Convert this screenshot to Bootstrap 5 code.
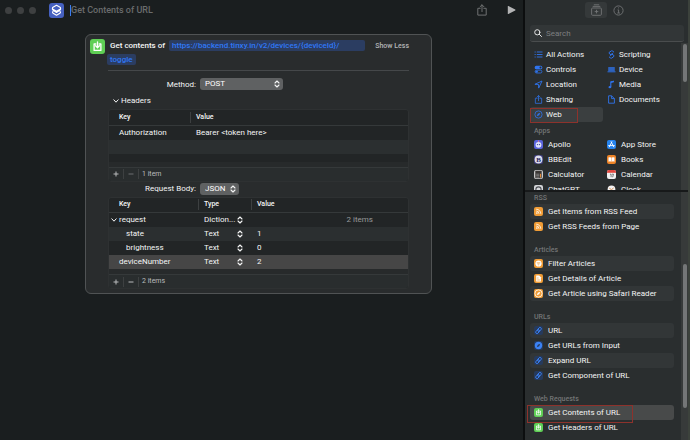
<!DOCTYPE html>
<html lang="en" data-bs-theme="dark">
<head>
<meta charset="utf-8">
<meta name="viewport" content="width=device-width, initial-scale=1">
<title>Shortcuts – Get Contents of URL</title>
<link rel="stylesheet" href="https://cdn.jsdelivr.net/npm/bootstrap@5.3.0/dist/css/bootstrap.min.css">
<style>
  body { font: 400 8px/15px Roboto, "Liberation Sans", sans-serif; background: #1a1e1f; color: #f4f5f5; overflow: hidden; }
  button, input, select { font: inherit; color: inherit; border: 0; background: none; padding: 0; margin: 0; }
  svg { display: block; flex: none; }
  ul { list-style: none; padding: 0; margin: 0; }
  .blue { color: #2f74ee; }

  /* title bar */
  .titlebar { height: 20px; padding-left: 5px; padding-right: 7px; }
  .dots { gap: 5px; }
  .dot { width: 7px; height: 7px; border-radius: 50%; background: #3e4041; }
  .app-tile { width: 15px; height: 15px; border-radius: 3px; background: #4661c0; color: #fff; margin-left: 13px; }
  .name-input { font-size: 9px; font-weight: 500; height: 11px; margin-left: 6px; border-left: 1px solid #3b7cf0; min-width: 0; outline: 0; }
  .name-input::placeholder { color: #6a6c6d; opacity: 1; }
  .share-btn { color: #6f7172; }
  .run-btn { color: #b3b4b5; margin-left: 20px; }

  /* action card */
  .canvas { padding: 14px 91px 0 85px; }
  .action { background: #292c2d; border: 1px solid #505354; border-radius: 6px; padding: 4px 22px 4px 4px; }
  .action-tile { width: 15px; height: 15px; border-radius: 3px; background: #5fcf55; color: #fff; }
  .action-head { gap: 5px; font-weight: 500; line-height: 14px; }
  .token { background: #2b3d61; color: #3078f6; border-radius: 2px; line-height: 11px; text-decoration: none; }
  .token-url { margin-left: 2px; padding: 0 26px 0 3px; }
  .token-end { padding: 0 3px; margin-left: -3px; }
  .show-less { color: #b4b6b7; font-size: 7px; font-weight: 500; }
  .action-body { margin-left: 18px; border-top: 1px solid #45484a; margin-top: 3px; padding-top: 7px; }
  .field { gap: 4px; height: 12px; }
  .field label { width: 88px; text-align: right; }
  .field-body { margin: 1px 0 2px; }
  .picker { display: inline-grid; align-items: center; }
  .picker > * { grid-area: 1 / 1; }
  .picker select { appearance: none; width: 100%; line-height: 12px; height: 12px; }
  .picker svg { justify-self: end; margin-right: 3px; pointer-events: none; }
  .picker-filled select { background: #5f6162; border-radius: 3px; padding-left: 5px; color: #fff; }
  .picker-wide { width: 83px; }
  .picker-short { width: 39px; }
  .disclosure { gap: 2px; margin: 3px 0 1px 5px; height: 15px; }

  .grid-box { border: 1px solid #2e3132; border-radius: 3px; background: #222526; overflow: hidden; }
  .grid-box table { width: 100%; table-layout: fixed; border-collapse: collapse; }
  .grid-box th, .grid-box td { padding: 0 0 0 6px; height: 14px; line-height: 14px; white-space: nowrap; font-weight: 400; }
  .grid-box th { height: 15px; font-size: 7px; font-weight: 500; }
  .grid-box thead tr { border-bottom: 1px solid #35393a; }
  .grid-box th span { display: block; line-height: 11px; border-left: 1px solid #3d4041; margin-left: -6px; padding-left: 5px; }
  .grid-box th:first-child, .grid-box td:first-child { padding-left: 10px; }
  .grid-box th:first-child span { border: 0; margin: 0; padding: 0; }
  .grid-box td.child-key { padding-left: 17px; }
  .grid-box td.open-key { padding-left: 2px; }
  .open-key div { gap: 2px; }
  .alt { background: #2b2f30; }
  .picked { background: #464646; }
  .grid-box tr.stub td { height: 8px; line-height: 8px; }
  .grid-box tr.edge td { height: 5px; line-height: 5px; background: #272a2b; }
  .grid-foot { height: 14px; background: #292d2e; border-top: 1px solid #35393a; font-size: 7px; color: #b9bbbc; line-height: 13px; }
  .grid-foot button { width: 15px; height: 10px; display: grid; place-items: center; border-right: 1px solid #3d4041; }
  .grid-foot button.dim { color: #6d6f70; }
  .grid-foot span { padding-left: 3px; }
  .key-col { width: 81px; }
  .key-col-deep { width: 89px; }
  .type-col { width: 53px; }
  .type-picker { width: 39px; }
  .type-picker svg { margin: 0; }
  .grid-box td.total { color: #97999a; padding-right: 35px; }

  /* library sidebar */
  .library { flex: none; width: 167px; background: #2a2e2f; border-left: 2px solid #0c0e0f; border-right: 2px solid #3c423c; }
  .lib-tabs { height: 20px; padding-left: 60px; gap: 6px; }
  .lib-tabs button { height: 16px; display: grid; place-items: center; color: #737576; }
  .lib-tabs .tab-on { width: 22px; border-radius: 3px; background: #35393a; }
  .search { margin: 5px 4px 1px 5px; height: 17px; border-radius: 3px; background: #323637; border-bottom: 1px solid #4a4d4e; padding-left: 4px; gap: 4px; }
  .search input { flex: 1; min-width: 0; height: 15px; outline: 0; }
  .search input::placeholder { color: #7d7f80; opacity: 1; }
  .pane { overflow: hidden; display: flex; }
  .pane-top { height: 149px; border-bottom: 2px solid #17191a; }
  .pane-body { flex: 1; padding-left: 5px; min-width: 0; }
  .pane-low .pane-body { padding-top: 1px; }
  .track { width: 7px; background: #373a3a; }
  .thumb { width: 4px; border-radius: 2px; background: #747677; margin: 1px auto 0; }
  .thumb-top { height: 38px; }
  .thumb-low { height: 144px; margin-top: 72px; }
  .pair { display: grid; grid-template-columns: 73px 1fr; padding-top: 4px; }
  .pair a, .rows a { display: flex; align-items: center; height: 15px; color: inherit; text-decoration: none; white-space: nowrap; border-radius: 3px; padding-left: 4px; gap: 3px; position: relative; }
  .pair.apps { padding-top: 0; }
  .apps a, .rows a { gap: 5px; }
  .caption { font-size: 7px; font-weight: 500; color: #737576; padding-left: 4px; line-height: 11px; height: 11px; margin: 0; }
  .apps-caption { margin-top: 4px; }
  .web-on { background: #3b3f40; }
  .rows { margin: 0 7px 11px 0; }
  .rows li:nth-child(odd) a { background: #323637; }
  .rows li a.row-on { background: #484a4a; }
  .outline-red::after { content: ""; position: absolute; border: 1px solid #8d322c; pointer-events: none; }
  .web-on::after { inset: 1px 25px -1px 0; }
  .row-on::after { inset: 0 41px -3px -3px; }
  .tile { width: 9px; height: 9px; border-radius: 2px; display: grid; place-items: center; flex: none; color: #fff; overflow: hidden; }
  .t-orange { background: #f09c36; }
  .t-green { background: #5fcf55; }
  .t-navy { background: #263a5c; color: #3b82f4; }
</style>
<script src="https://cdn.jsdelivr.net/npm/bootstrap@5.3.0/dist/js/bootstrap.bundle.min.js"></script>
</head>
<body>
<svg class="d-none" aria-hidden="true">
  <defs>
    <symbol id="steps" viewBox="0 0 6 8"><path d="M1 3 3 1l2 2M1 5l2 2 2-2" fill="none" stroke="currentColor" stroke-width="1.1" stroke-linecap="round" stroke-linejoin="round"/></symbol>
    <symbol id="down" viewBox="0 0 6 6"><path d="m.8 1.8 2.2 2.4 2.2-2.4" fill="none" stroke="currentColor" stroke-linecap="round"/></symbol>
    <symbol id="plus" viewBox="0 0 6 6"><path d="M3 .5v5M.5 3h5" stroke="currentColor"/></symbol>
    <symbol id="minus" viewBox="0 0 6 6"><path d="M.5 3h5" stroke="currentColor"/></symbol>
    <symbol id="fetch" viewBox="0 0 15 15"><path d="M5.8 5H4.1v6.4h6.8V5H9.2M7.5 2.8v5.6M5.6 6.7l1.9 2 1.9-2" fill="none" stroke="currentColor" stroke-width="1.3" stroke-linecap="round" stroke-linejoin="round"/></symbol>
    <symbol id="share" viewBox="0 0 10 12"><path d="M3.2 4.3H.8v6.8h8.4V4.3H6.8M5 7.6V.9M3 2.8 5 .8l2 2" fill="none" stroke="currentColor" stroke-linecap="round" stroke-linejoin="round"/></symbol>
    <symbol id="rss" viewBox="0 0 9 9"><circle cx="2.9" cy="6.1" r=".8" fill="currentColor"/><path d="M2.2 4A2.8 2.8 0 0 1 5 6.8M2.2 2.2a4.6 4.6 0 0 1 4.6 4.6" fill="none" stroke="currentColor" stroke-width=".8"/></symbol>
    <symbol id="chain" viewBox="0 0 9 9"><g transform="rotate(-50 4.5 4.5)" fill="none" stroke="currentColor" stroke-width=".9"><rect x=".9" y="3.2" width="4.4" height="2.6" rx="1.3"/><rect x="3.7" y="3.2" width="4.4" height="2.6" rx="1.3"/></g></symbol>
    <symbol id="safari" viewBox="0 0 9 9"><circle cx="4.5" cy="4.5" r="3.6" fill="none" stroke="currentColor" stroke-width=".8"/><path d="m6.3 2.7-1.1 2.5-2.5 1.1 1.1-2.5z" fill="currentColor"/></symbol>
  </defs>
</svg>

<div class="d-flex vh-100">
  <main class="flex-grow-1">
    <header class="titlebar d-flex align-items-center">
      <div class="dots d-flex"><i class="dot"></i><i class="dot"></i><i class="dot"></i></div>
      <svg class="app-tile" viewBox="0 0 15 15" fill="none" stroke="currentColor" stroke-linejoin="round" stroke-width="1.1"><path d="m7.5 2.300 3.500 2c.8.5.8 1.300 0 1.800L7.500 8.200 4 6.100c-.8-.5-.8-1.300 0-1.800zM4.300 8.200c-1 .6-1 1.500-.2 2l3.400 2.100 3.400-2.100c.8-.5.8-1.400-.2-2M3.400 5.500c-.2.8 0 1.300.7 1.800l3.400 2.200 3.400-2.200c.7-.5.9-1 .7-1.800"/></svg>
      <input class="name-input flex-grow-1" type="text" placeholder="Get Contents of URL" aria-label="Shortcut name">
      <button type="button" class="share-btn" aria-label="Share"><svg width="10" height="12"><use href="#share"/></svg></button>
      <button type="button" class="run-btn" aria-label="Run"><svg width="9" height="10" viewBox="0 0 9 10"><path d="M.8 1.300v7.400c0 .4.3.5.6.3l6.800-3.600c.4-.2.4-.6 0-.8L1.400 1c-.3-.2-.6 0-.6.3z" fill="currentColor"/></svg></button>
    </header>

    <div class="canvas">
      <section class="action">
        <div class="action-head d-flex">
          <svg class="action-tile"><use href="#fetch"/></svg>
          <div class="flex-grow-1">Get contents of <a href="#" class="token token-url d-inline-block">https://backend.tinxy.in/v2/devices/{deviceId}/</a><br><a href="#" class="token token-end d-inline-block">toggle</a></div>
          <button type="button" class="show-less align-self-start text-nowrap">Show Less</button>
        </div>
        <div class="action-body">
          <div class="field d-flex align-items-center">
            <label for="method">Method:</label>
            <span class="picker picker-filled picker-wide"><select id="method"><option>POST</option><option>GET</option></select><svg width="6" height="8"><use href="#steps"/></svg></span>
          </div>
          <div class="disclosure d-flex align-items-center"><svg width="6" height="6"><use href="#down"/></svg>Headers</div>
          <div class="grid-box">
            <table>
              <colgroup><col class="key-col"><col></colgroup>
              <thead><tr><th><span>Key</span></th><th><span>Value</span></th></tr></thead>
              <tbody>
                <tr><td>Authorization</td><td>Bearer &lt;token here&gt;</td></tr>
                <tr class="alt"><td></td><td></td></tr>
                <tr class="stub"><td></td><td></td></tr>
                <tr class="edge"><td></td><td></td></tr>
              </tbody>
            </table>
            <div class="grid-foot d-flex align-items-center"><button type="button" aria-label="Add header"><svg width="6" height="6"><use href="#plus"/></svg></button><button type="button" class="dim" aria-label="Remove header"><svg width="6" height="6"><use href="#minus"/></svg></button><span>1 item</span></div>
          </div>
          <div class="field field-body d-flex align-items-center">
            <label for="body">Request Body:</label>
            <span class="picker picker-filled picker-short"><select id="body"><option>JSON</option><option>Form</option></select><svg width="6" height="8"><use href="#steps"/></svg></span>
          </div>
          <div class="grid-box">
            <table>
              <colgroup><col class="key-col-deep"><col class="type-col"><col></colgroup>
              <thead><tr><th><span>Key</span></th><th><span>Type</span></th><th><span>Value</span></th></tr></thead>
              <tbody>
                <tr><td class="open-key"><div class="d-flex align-items-center"><svg width="6" height="6"><use href="#down"/></svg>request</div></td><td><span class="picker type-picker"><select aria-label="Type of request"><option>Diction...</option></select><svg width="6" height="8"><use href="#steps"/></svg></span></td><td class="text-end total">2 items</td></tr>
                <tr class="alt"><td class="child-key">state</td><td><span class="picker type-picker"><select aria-label="Type of state"><option>Text</option></select><svg width="6" height="8"><use href="#steps"/></svg></span></td><td>1</td></tr>
                <tr><td class="child-key">brightness</td><td><span class="picker type-picker"><select aria-label="Type of brightness"><option>Text</option></select><svg width="6" height="8"><use href="#steps"/></svg></span></td><td>0</td></tr>
                <tr class="picked"><td>deviceNumber</td><td><span class="picker type-picker"><select aria-label="Type of deviceNumber"><option>Text</option></select><svg width="6" height="8"><use href="#steps"/></svg></span></td><td>2</td></tr>
                <tr class="edge"><td></td><td></td><td></td></tr>
              </tbody>
            </table>
            <div class="grid-foot d-flex align-items-center"><button type="button" aria-label="Add field"><svg width="6" height="6"><use href="#plus"/></svg></button><button type="button" aria-label="Remove field"><svg width="6" height="6"><use href="#minus"/></svg></button><span>2 items</span></div>
          </div>
        </div>
      </section>
    </div>
  </main>

  <aside class="library">
    <div class="lib-tabs d-flex align-items-center">
      <button type="button" class="tab-on" aria-label="Action library"><svg width="11" height="12" viewBox="0 0 11 12" fill="none" stroke="currentColor" stroke-width=".9"><rect x=".6" y="4" width="9.800" height="7.300" rx="1"/><path d="M1.700 2.400h7.600M2.800.8h5.400M5.500 5.800v3.600M3.700 7.600h3.600"/></svg></button>
      <button type="button" aria-label="Shortcut details"><svg width="11" height="11" viewBox="0 0 11 11" fill="none" stroke="currentColor" stroke-width=".9"><circle cx="5.500" cy="5.500" r="4.600"/><path d="M4.600 4.900h1v3M4.300 8h2.600M5.100 2.900h.9" /></svg></button>
    </div>
    <div class="search d-flex align-items-center">
      <svg width="8" height="8" viewBox="0 0 8 8" fill="none" stroke="#e4e5e5" stroke-linecap="round"><circle cx="3.300" cy="3.300" r="2.600"/><path d="m5.300 5.300 2.200 2.200"/></svg>
      <input type="search" placeholder="Search" aria-label="Search actions">
    </div>

    <div class="pane pane-top">
      <div class="pane-body">
        <nav class="pair" aria-label="Categories">
          <a href="#"><svg class="blue" width="9" height="9" viewBox="0 0 9 9" stroke="currentColor" stroke-width=".9"><path d="M2.800 2h5.700M2.800 4.500h5.700M2.800 7h5.700M.6 2h1.100M.6 4.500h1.100M.6 7h1.100"/></svg>All Actions</a>
          <a href="#"><svg class="blue" width="9" height="9" viewBox="0 0 9 9" fill="none" stroke="currentColor" stroke-width="1" stroke-linejoin="round"><path d="M4.300 5 2.100 3.400Q1.600 3 2.100 2.500L4.300.9q.5-.3 1 0L7 2.200M4.700 3.900 6.900 5.500q.5.4 0 .9L4.700 8.100q-.5.3-1 0L2 6.800M5.800 3 3.200 5.800"/></svg>Scripting</a>
          <a href="#"><svg class="blue" width="9" height="9" viewBox="0 0 9 9"><rect x=".7" y=".8" width="7.600" height="3.400" rx="1.500" fill="currentColor"/><circle cx="6.500" cy="2.500" r="1" fill="#2a2d2e"/><rect x="1.100" y="5.200" width="6.800" height="2.800" rx="1.400" fill="none" stroke="currentColor" stroke-width=".8"/><circle cx="2.700" cy="6.600" r="1.200" fill="currentColor"/></svg>Controls</a>
          <a href="#"><svg class="blue" width="9" height="9" viewBox="0 0 9 9"><rect x="1.200" y="2" width="6.600" height="4.200" rx=".5" fill="currentColor" opacity=".75"/><path d="M.5 6.800h8" stroke="currentColor" stroke-width=".9"/></svg>Device</a>
          <a href="#"><svg class="blue" width="9" height="9" viewBox="0 0 9 9"><path d="M8 1 .9 4.300l3.600.2.200 3.600z" fill="none" stroke="currentColor" stroke-width=".9" stroke-linejoin="round"/></svg>Location</a>
          <a href="#"><svg class="blue" width="9" height="9" viewBox="0 0 9 9"><path d="M3.800 7V2l3-.8" fill="none" stroke="currentColor" stroke-width="1.100"/><path d="M3.800 1.500 6.900.7v1.500L3.800 3z" fill="currentColor"/><ellipse cx="2.900" cy="7.200" rx="1.400" ry="1.100" fill="currentColor"/></svg>Media</a>
          <a href="#"><svg class="blue" width="9" height="9"><use href="#share"/></svg>Sharing</a>
          <a href="#"><svg class="blue" width="9" height="9" viewBox="0 0 9 9" fill="none" stroke="currentColor" stroke-width=".9" stroke-linejoin="round"><path d="M1.600.8h3l2.800 2.800v4.600H1.600zM4.600.8v2.800h2.800"/></svg>Documents</a>
          <a href="#" class="web-on outline-red"><svg class="blue" width="9" height="9"><use href="#safari"/></svg>Web</a>
        </nav>
        <h2 class="caption apps-caption">Apps</h2>
        <nav class="pair apps" aria-label="Apps">
          <a href="#"><svg class="tile" viewBox="0 0 9 9"><rect width="9" height="9" fill="#5a64dd"/><circle cx="4.500" cy="4.800" r="2.900" fill="#dfe3fb"/><circle cx="3.500" cy="4.600" r=".7" fill="#3b3f9c"/><circle cx="5.500" cy="4.600" r=".7" fill="#3b3f9c"/><circle cx="4.500" cy="1.300" r=".7" fill="#ef7a8b"/></svg>Apollo</a>
          <a href="#"><svg class="tile" viewBox="0 0 9 9"><rect width="9" height="9" fill="#2583ee"/><path d="M4.900 1.800 2.300 6.900M4.100 1.800l2.700 5.100M1.600 5.600h5.800" stroke="#fff" stroke-width=".9" stroke-linecap="round"/></svg>App Store</a>
          <a href="#"><svg class="tile" viewBox="0 0 9 9"><rect width="9" height="9" fill="#3b3b78"/><circle cx="4.500" cy="4.500" r="3.900" fill="#dcdcec"/><text x="4.500" y="7" font-size="7" font-weight="700" font-family="Liberation Serif" text-anchor="middle" fill="#26265e">B</text></svg>BBEdit</a>
          <a href="#"><svg class="tile" viewBox="0 0 9 9"><rect width="9" height="9" fill="#ee8427"/><path d="M1.500 2.500q1.500-.7 2.800 0v4.200q-1.300-.7-2.800 0zM4.700 2.500q1.300-.7 2.800 0v4.200q-1.500-.7-2.800 0z" fill="#fff"/></svg>Books</a>
          <a href="#"><svg class="tile" viewBox="0 0 9 9"><rect width="9" height="9" fill="#c9c9c9"/><rect x="1.300" y=".8" width="6.400" height="7.400" rx=".8" fill="#3a3735"/><path d="M2.200 4.200h3.200M2.200 5.700h3.200M2.200 7.200h3.200" stroke="#8e8e8e" stroke-width=".8"/><path d="M6.500 3.800v3.800" stroke="#e58b36"/></svg>Calculator</a>
          <a href="#"><svg class="tile" viewBox="0 0 9 9"><rect width="9" height="9" fill="#f2f2f2"/><rect width="9" height="2.800" fill="#e3473f"/><path d="M3 4.200h1.100v3M5 4.200h1.500L5.600 7.200" fill="none" stroke="#4a4a4a" stroke-width=".7"/></svg>Calendar</a>
          <a href="#"><svg class="tile" viewBox="0 0 9 9"><rect width="9" height="9" fill="#d5d7da"/><circle cx="4.500" cy="4.500" r="2.600" fill="none" stroke="#4c4f55" stroke-width="1.100"/></svg>ChatGPT</a>
          <a href="#"><svg class="tile" viewBox="0 0 9 9"><rect width="9" height="9" fill="#2b2b2b"/><circle cx="4.500" cy="4.500" r="3.900" fill="#f3f3f3"/><path d="m2.400 3.300 2.100 1.300L6.600 3" fill="none" stroke="#d07a30" stroke-width=".8"/></svg>Clock</a>
        </nav>
      </div>
      <div class="track"><div class="thumb thumb-top"></div></div>
    </div>

    <div class="pane pane-low">
      <div class="pane-body">
        <h2 class="caption">RSS</h2>
        <ul class="rows">
          <li><a href="#"><span class="tile t-orange"><svg width="9" height="9"><use href="#rss"/></svg></span>Get Items from RSS Feed</a></li>
          <li><a href="#"><span class="tile t-orange"><svg width="9" height="9"><use href="#rss"/></svg></span>Get RSS Feeds from Page</a></li>
        </ul>
        <h2 class="caption">Articles</h2>
        <ul class="rows">
          <li><a href="#"><span class="tile t-orange"><svg width="9" height="9" viewBox="0 0 9 9"><circle cx="4.500" cy="4.500" r="3.100" fill="#fff"/><path d="M2.700 3.700h3.600M3.300 4.800h2.400M3.900 5.900h1.200" stroke="#f09c36" stroke-width=".6"/></svg></span>Filter Articles</a></li>
          <li><a href="#"><span class="tile t-orange"><svg width="9" height="9" viewBox="0 0 9 9"><path d="M2.200 1.500h3l1.700 1.700v4.300H2.200z" fill="#fff"/><path d="M3.200 4h1.300M3.200 6h2.700" stroke="#f09c36" stroke-width=".8"/></svg></span>Get Details of Article</a></li>
          <li><a href="#"><span class="tile t-orange"><svg width="9" height="9"><use href="#safari"/></svg></span>Get Article using Safari Reader</a></li>
        </ul>
        <h2 class="caption">URLs</h2>
        <ul class="rows">
          <li><a href="#"><span class="tile t-navy"><svg width="9" height="9"><use href="#chain"/></svg></span>URL</a></li>
          <li><a href="#"><span class="tile t-navy"><svg width="9" height="9" viewBox="0 0 9 9"><circle cx="4.500" cy="4.500" r="3.700" fill="#3b82f4"/><path d="m6.200 2.800-1 2.400-2.400 1 1-2.400z" fill="#263a5c"/></svg></span>Get URLs from Input</a></li>
          <li><a href="#"><span class="tile t-navy"><svg width="9" height="9"><use href="#chain"/></svg></span>Expand URL</a></li>
          <li><a href="#"><span class="tile t-navy"><svg width="9" height="9"><use href="#chain"/></svg></span>Get Component of URL</a></li>
        </ul>
        <h2 class="caption">Web Requests</h2>
        <ul class="rows">
          <li><a href="#" class="row-on outline-red"><span class="tile t-green"><svg width="9" height="9"><use href="#fetch"/></svg></span>Get Contents of URL</a></li>
          <li><a href="#"><span class="tile t-green"><svg width="9" height="9"><use href="#fetch"/></svg></span>Get Headers of URL</a></li>
        </ul>
      </div>
      <div class="track"><div class="thumb thumb-low"></div></div>
    </div>
  </aside>
</div>
</body>
</html>
